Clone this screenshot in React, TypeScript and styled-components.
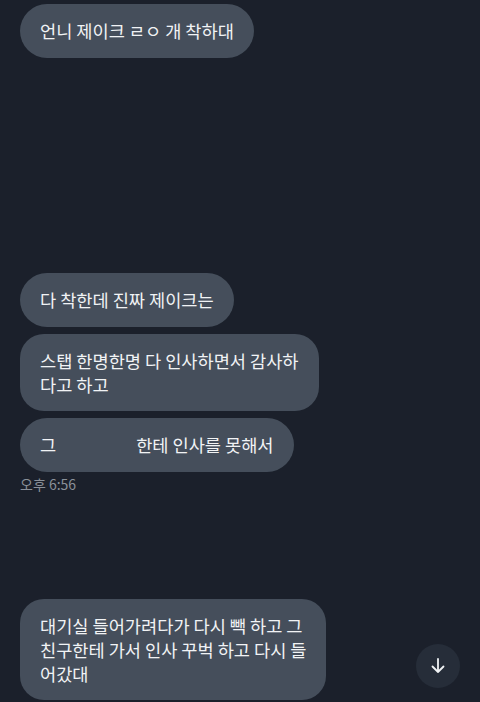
import React from 'react';
import styled, { createGlobalStyle } from 'styled-components';

const GlobalStyle = createGlobalStyle`
  html, body {
    margin: 0;
    padding: 0;
    background: #1b202b;
  }
  body {
    font-family: "Noto Sans CJK KR", "Noto Sans", sans-serif;
    -webkit-font-smoothing: antialiased;
  }
`;

const Screen = styled.div`
  position: relative;
  width: 480px;
  height: 702px;
  overflow: hidden;
  background: #1b202b;
  padding: 4px 20px 0;
  box-sizing: border-box;
  display: flex;
  flex-direction: column;
`;

const Group = styled.div<{ $gap: number }>`
  display: flex;
  flex-direction: column;
  align-items: flex-start;
  gap: 7px;
  margin-top: ${({ $gap }) => $gap}px;
`;

const Bubble = styled.div<{ $multi?: boolean }>`
  background: #454e5b;
  color: #f1f3f5;
  font-size: 17.6px;
  line-height: 24px;
  padding: ${({ $multi }) => ($multi ? '15px 20px 14px' : '15px 20px 15px')};
  border-radius: ${({ $multi }) => ($multi ? '24px' : '27px')};
  box-sizing: border-box;
  white-space: nowrap;
`;

const Blank = styled.span`
  display: inline-block;
  width: 80px;
`;

const Time = styled.div`
  color: #8a9099;
  font-size: 14px;
  line-height: 16px;
  margin-top: -3px;
`;

const ScrollButton = styled.button`
  position: absolute;
  left: 416px;
  top: 644px;
  width: 44px;
  height: 44px;
  border-radius: 50%;
  border: none;
  background: #262d39;
  display: flex;
  align-items: center;
  justify-content: center;
  padding: 0;
`;

export default function App() {
  return (
    <>
      <GlobalStyle />
      <Screen>
        <Group $gap={0}>
          <Bubble>언니 제이크 ㄹㅇ 개 착하대</Bubble>
        </Group>

        <Group $gap={215}>
          <Bubble>다 착한데 진짜 제이크는</Bubble>
          <Bubble $multi>
            스탭 한명한명 다 인사하면서 감사하
            <br />
            다고 하고
          </Bubble>
          <Bubble>
            그<Blank />한테 인사를 못해서
          </Bubble>
          <Time>오후 6:56</Time>
        </Group>

        <Group $gap={107}>
          <Bubble $multi>
            대기실 들어가려다가 다시 빽 하고 그
            <br />
            친구한테 가서 인사 꾸벅 하고 다시 들
            <br />
            어갔대
          </Bubble>
        </Group>

        <ScrollButton aria-label="scroll down">
          <svg width="16" height="18" viewBox="0 0 16 18" fill="none">
            <path
              d="M8 2v13M2.5 9.5L8 15l5.5-5.5"
              stroke="#f1f3f5"
              strokeWidth="1.8"
              strokeLinecap="round"
              strokeLinejoin="round"
            />
          </svg>
        </ScrollButton>
      </Screen>
    </>
  );
}
